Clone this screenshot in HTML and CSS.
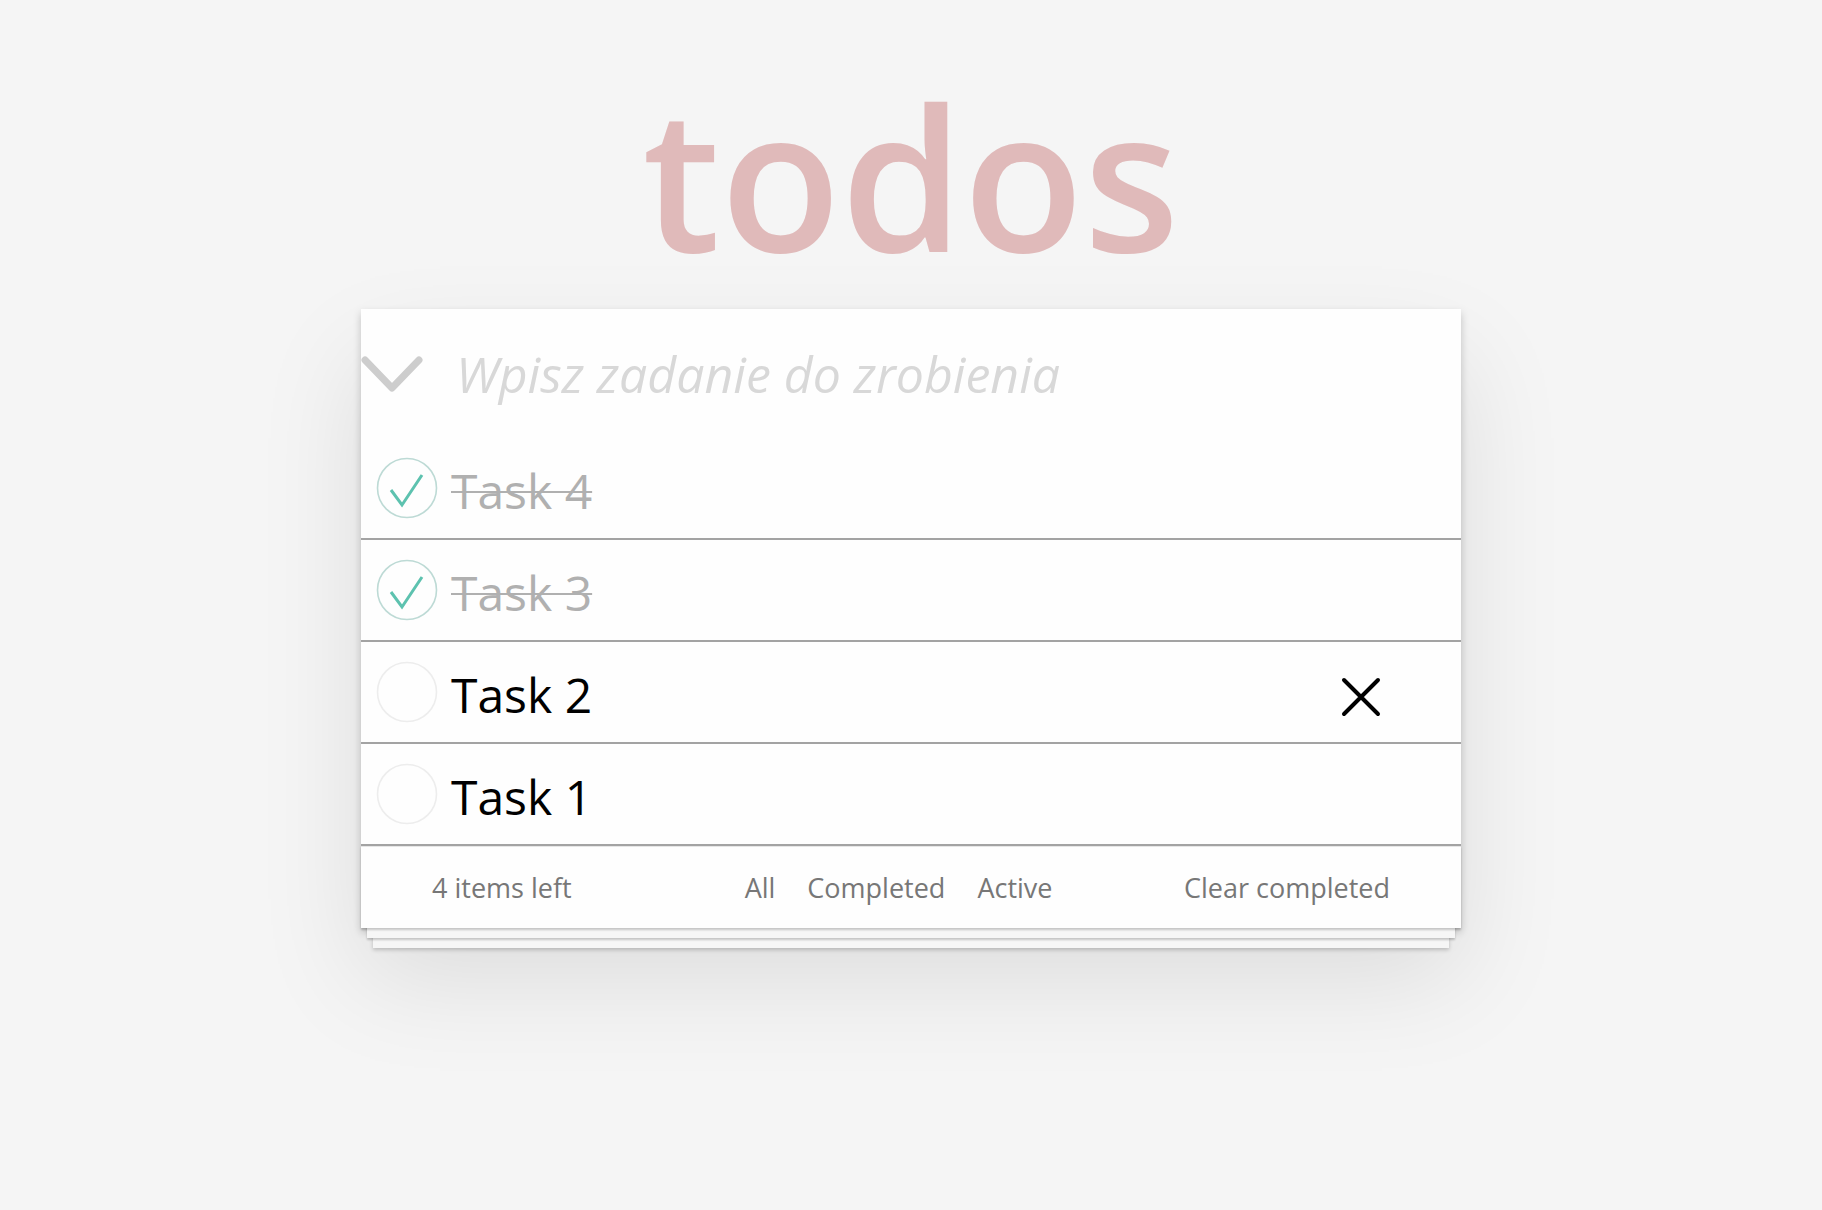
FILE: index.html
```html
<!DOCTYPE html>
<html lang="pl">
<head>
<meta charset="utf-8">
<title>todos</title>
<link rel="stylesheet" href="styles.css">
</head>
<body>
<section class="app">
  <h1 class="title">todos</h1>
  <div class="card">
    <header class="new-row">
      <span class="toggle-all">
        <svg width="62" height="36" viewBox="0 0 62 36"><polyline points="4,4 31,32 58,4" fill="none" stroke="#cdcdcd" stroke-width="7" stroke-linecap="round" stroke-linejoin="round"/></svg>
      </span>
      <input class="new-todo" type="text" placeholder="Wpisz zadanie do zrobienia">
    </header>
    <ul class="list">
      <li class="item done">
        <span class="check"><svg width="62" height="62" viewBox="0 0 62 62"><circle cx="31" cy="31" r="29.5" fill="none" stroke="#bddad5" stroke-width="1.6"/><polyline points="15,33 26,48 46,18" fill="none" stroke="#5dc2af" stroke-width="3"/></svg></span>
        <span class="label">Task 4</span>
      </li>
      <li class="item done">
        <span class="check"><svg width="62" height="62" viewBox="0 0 62 62"><circle cx="31" cy="31" r="29.5" fill="none" stroke="#bddad5" stroke-width="1.6"/><polyline points="15,33 26,48 46,18" fill="none" stroke="#5dc2af" stroke-width="3"/></svg></span>
        <span class="label">Task 3</span>
      </li>
      <li class="item">
        <span class="check"><svg width="62" height="62" viewBox="0 0 62 62"><circle cx="31" cy="31" r="29.5" fill="none" stroke="#ededed" stroke-width="1.6"/></svg></span>
        <span class="label">Task 2</span>
        <span class="destroy"><svg width="42" height="42" viewBox="0 0 42 42"><path d="M4 4 L38 38 M38 4 L4 38" stroke="#000" stroke-width="4" stroke-linecap="round"/></svg></span>
      </li>
      <li class="item">
        <span class="check"><svg width="62" height="62" viewBox="0 0 62 62"><circle cx="31" cy="31" r="29.5" fill="none" stroke="#ededed" stroke-width="1.6"/></svg></span>
        <span class="label">Task 1</span>
      </li>
    </ul>
    <footer class="footer">
      <span class="count">4 items left</span>
      <ul class="filters">
        <li>All</li>
        <li>Completed</li>
        <li>Active</li>
      </ul>
      <span class="clear">Clear completed</span>
    </footer>
  </div>
</section>
</body>
</html>
```

FILE: styles.css
```css
html, body {
  margin: 0;
  padding: 0;
}

html {
  min-height: 100%;
}

body {
  min-height: 1210px;
  background: #f5f5f5;
  font-family: "Open Sans", "Liberation Sans", sans-serif;
  color: #000;
}

.app {
  width: 1100px;
  margin: 0 auto;
  padding-top: 76px;
}

.title {
  margin: 0 0 33px;
  font-size: 197px;
  line-height: 200px;
  font-weight: 600;
  color: #e0baba;
  text-align: center;
}

.card {
  background: #fefefe;
  box-shadow: 0 4px 8px rgba(0, 0, 0, 0.2), 0 50px 100px rgba(0, 0, 0, 0.1);
}

.new-row {
  display: flex;
  align-items: center;
  height: 129px;
}

.toggle-all {
  display: flex;
  flex: none;
  width: 62px;
  height: 36px;
}

.new-todo {
  flex: 1;
  margin-left: 33px;
  padding: 0;
  border: 0;
  outline: 0;
  background: transparent;
  font-family: "Open Sans", "Liberation Sans", sans-serif;
  font-style: italic;
  font-weight: 400;
  font-size: 50px;
  color: #4d4d4d;
}

.new-todo::placeholder {
  color: #d8d8d8;
}

.list {
  list-style: none;
  margin: 0;
  padding: 0;
}

.item {
  display: flex;
  align-items: center;
  height: 100px;
  padding: 0 79px 0 15px;
  border-bottom: 2px solid #a3a3a3;
}

.check {
  display: flex;
  flex: none;
  width: 62px;
  height: 62px;
}

.label {
  flex: 1;
  margin-left: 13px;
  padding-top: 6px;
  font-size: 48px;
  line-height: 1.2;
  color: #000;
}

.done .label {
  color: #b0b0b0;
  text-decoration: line-through;
  text-decoration-thickness: 2px;
}

.destroy {
  display: flex;
  flex: none;
  width: 42px;
  height: 42px;
  margin-top: 10px;
}

.footer {
  display: flex;
  align-items: center;
  height: 81px;
  padding: 0 71px;
  border-top: 1px solid #e6e6e6;
  font-size: 27px;
  font-weight: 400;
  color: #777;
  box-shadow: 0 2px 2px rgba(0, 0, 0, 0.2),
    0 16px 0 -6px #f6f6f6,
    0 18px 2px -6px rgba(0, 0, 0, 0.2),
    0 32px 0 -12px #f6f6f6,
    0 34px 4px -12px rgba(0, 0, 0, 0.2);
}

.filters {
  display: flex;
  gap: 32px;
  list-style: none;
  margin: 0 0 0 173px;
  padding: 0;
}

.clear {
  margin-left: auto;
}
```
